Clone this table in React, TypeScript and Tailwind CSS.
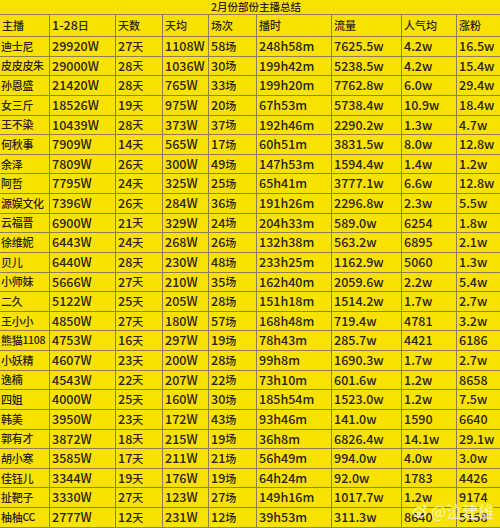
import React from 'react';

const rows: string[][] = [
  ['迪士尼', '29920W', '27天', '1108W', '58场', '248h58m', '7625.5w', '4.2w', '16.5w'],
  ['皮皮皮朱', '29000W', '28天', '1036W', '30场', '199h42m', '5238.5w', '4.2w', '15.4w'],
  ['孙恩盛', '21420W', '28天', '765W', '33场', '199h20m', '7762.8w', '6.0w', '29.4w'],
  ['女三斤', '18526W', '19天', '975W', '20场', '67h53m', '5738.4w', '10.9w', '18.4w'],
  ['王不染', '10439W', '28天', '373W', '37场', '192h46m', '2290.2w', '1.3w', '4.7w'],
  ['何秋事', '7909W', '14天', '565W', '17场', '60h51m', '3831.5w', '8.0w', '12.8w'],
  ['余泽', '7809W', '26天', '300W', '49场', '147h53m', '1594.4w', '1.4w', '1.2w'],
  ['阿哲', '7795W', '24天', '325W', '25场', '65h41m', '3777.1w', '6.6w', '12.8w'],
  ['源娱文化', '7396W', '26天', '284W', '36场', '191h26m', '2296.8w', '2.3w', '5.5w'],
  ['云福晋', '6900W', '21天', '329W', '24场', '204h33m', '589.0w', '6254', '1.8w'],
  ['徐维妮', '6443W', '24天', '268W', '26场', '132h38m', '563.2w', '6895', '2.1w'],
  ['贝儿', '6440W', '28天', '230W', '48场', '233h25m', '1162.9w', '5060', '1.3w'],
  ['小师妹', '5666W', '27天', '210W', '35场', '162h40m', '2059.6w', '2.2w', '5.4w'],
  ['二久', '5122W', '25天', '205W', '28场', '151h18m', '1514.2w', '1.7w', '2.7w'],
  ['王小小', '4850W', '27天', '180W', '57场', '168h48m', '719.4w', '4781', '3.2w'],
  ['熊猫1108', '4753W', '16天', '297W', '19场', '78h43m', '285.7w', '4421', '6186'],
  ['小妖精', '4607W', '23天', '200W', '28场', '99h8m', '1690.3w', '1.7w', '2.7w'],
  ['逸楠', '4543W', '22天', '207W', '22场', '73h10m', '601.6w', '1.2w', '8658'],
  ['四姐', '4000W', '25天', '160W', '30场', '185h54m', '1523.0w', '1.2w', '7.5w'],
  ['韩美', '3950W', '23天', '172W', '43场', '93h46m', '141.0w', '1590', '6640'],
  ['郭有才', '3872W', '18天', '215W', '19场', '36h8m', '6826.4w', '14.1w', '29.1w'],
  ['胡小寒', '3585W', '17天', '211W', '21场', '56h49m', '994.0w', '4.0w', '3.0w'],
  ['佳钰儿', '3344W', '19天', '176W', '19场', '64h24m', '92.0w', '1783', '4426'],
  ['扯靶子', '3330W', '27天', '123W', '27场', '149h16m', '1017.7w', '1.2w', '9174'],
  ['柚柚CC', '2777W', '12天', '231W', '12场', '39h53m', '311.3w', '8640', '5158'],
];

const header = ['主播', '1-28日', '天数', '天均', '场次', '播时', '流量', '人气均', '涨粉'];

const cols = 'grid grid-cols-[50px_66px_47px_46px_48px_75px_70px_55px_43px]';

// CJK glyphs in the picture are narrower than the digits, so set them a size down
function Cell({ text }: { text: string }) {
  const parts = text.split(/([\u4e00-\u9fff]+)/).filter(Boolean);
  return (
    <>
      {parts.map((p, i) =>
        /[\u4e00-\u9fff]/.test(p) ? (
          <span key={i} className="text-[11px]">{p}</span>
        ) : (
          <span key={i}>{p}</span>
        )
      )}
    </>
  );
}

export default function App() {
  return (
    <div className="relative w-[500px] h-[528px] overflow-hidden bg-[#f9e102] text-[#2a2410] font-['Noto_Sans_CJK_SC','Noto_Sans',sans-serif]">
      <div className="h-[14px] flex items-center justify-center pl-[12px] text-[10.5px] leading-none font-medium">
        2月份部份主播总结
      </div>
      <div className="border-t border-[#8a7f55]">
        <div className={`${cols} h-[22px]`}>
          {header.map((h, i) => (
            <div key={i} className="flex items-center pl-[2px] text-[12.5px] leading-none font-medium whitespace-nowrap border-r border-b border-[#8a7f55] last:border-r-0">
              <Cell text={h} />
            </div>
          ))}
        </div>
        {rows.map((r, ri) => (
          <div key={ri} className={`${cols} h-[19.64px]`}>
            {r.map((c, ci) => (
              <div
                key={ci}
                className={`flex items-center leading-none font-medium whitespace-nowrap border-r border-b border-[#8a7f55] last:border-r-0 ${ci === 0 ? 'pl-[1px] text-[10.5px] tracking-[-0.3px]' : 'pl-[2px] text-[12.5px]'}`}
              >
                <Cell text={c} />
              </div>
            ))}
          </div>
        ))}
      </div>
      <div className="absolute left-[412px] top-[503px] flex items-center gap-[3px] text-white/75 text-[16px] leading-none">
        <svg width="16" height="14" viewBox="0 0 16 14" fill="none" stroke="white" strokeOpacity="0.8" strokeWidth="1.3">
          <path d="M7 3.5c-3 0.5-5.5 3-5.5 5.5 0 2.5 2.8 4 5.8 4 3.4 0 6-1.8 6-3.8 0-1.2-1-1.7-1.8-1.9 0.6-1.4-0.1-2.2-1.8-1.6 0.1-1.7-0.8-2.5-2.7-2.2z" />
          <ellipse cx="6.8" cy="9.4" rx="1.6" ry="1.3" />
          <path d="M11 1.3c1.8 0 3.2 1.4 3.2 3.2M11 3c0.8 0 1.5 0.7 1.5 1.5" />
        </svg>
        <span>@泣建雄</span>
      </div>
    </div>
  );
}
